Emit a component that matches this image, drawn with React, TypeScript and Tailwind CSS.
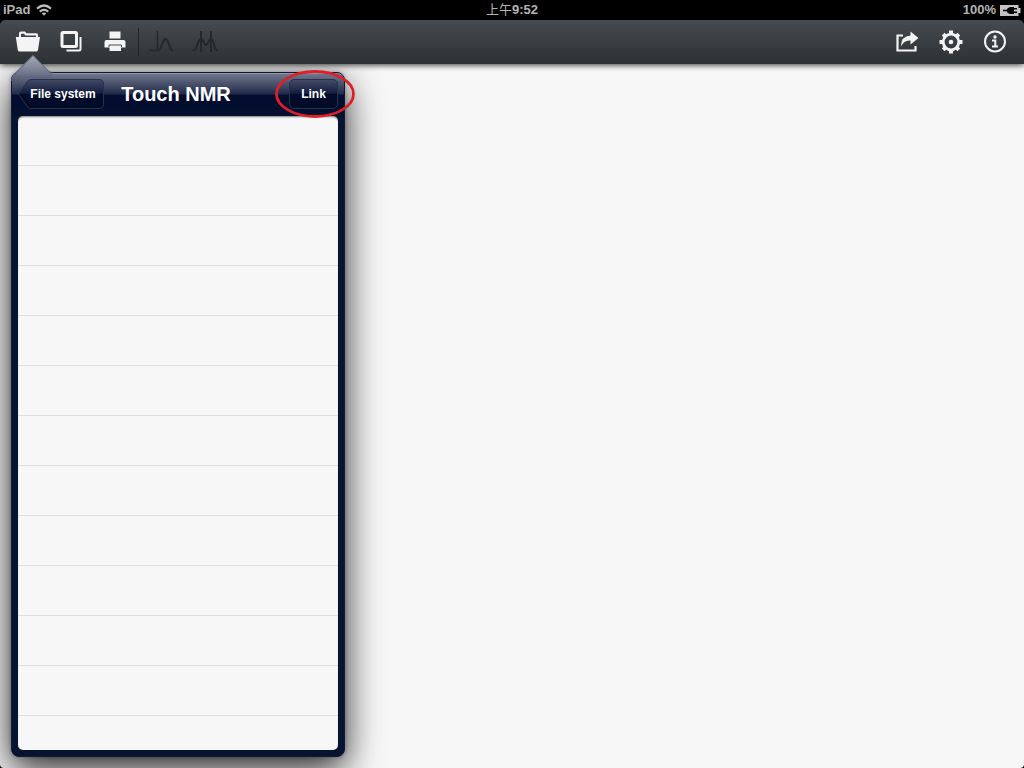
import type { ReactNode } from 'react';

function ToolButton({ label, children, disabled = false }: { label: string; children: ReactNode; disabled?: boolean }) {
  return (
    <button type="button" aria-label={label} disabled={disabled} className="flex size-11 shrink-0 items-center justify-center">
      {children}
    </button>
  );
}

function StatusBar() {
  return (
    <header className="grid h-5 shrink-0 grid-cols-3 items-center bg-black px-[3px] text-[13px] font-bold leading-5 text-[#b4b4b4]">
      <div className="flex items-center gap-[6px]">
        <span>iPad</span>
        <svg width="16" height="12" viewBox="0 0 16 12" fill="none" stroke="#bdbdbd" strokeWidth="2.200" aria-hidden="true">
          <path d="M1 4.600Q8 -1.600 15 4.600" />
          <path d="M3.800 7.600Q8 4 12.200 7.600" />
          <path d="M5.700 9.200Q8 7.600 10.300 9.200L8 11.800Z" fill="#bdbdbd" stroke="none" />
        </svg>
      </div>
      <div className="text-center">
        <span className="font-normal">上午</span>9:52
      </div>
      <div className="flex items-center justify-end gap-1">
        <span>100%</span>
        <svg width="21" height="11" viewBox="0 0 21 11" aria-hidden="true">
          <path d="M0 0H18.500V3H20.500V8H18.500V11H0Z" fill="#c4c4c4" />
          <path d="M3 5.500H7M13 3.700H17M13 7.300H17" stroke="#000" strokeWidth="1.500" />
          <path d="M14 2V9H10.500Q7 8.500 6.500 5.500Q7 2.500 10.500 2Z" fill="#000" />
        </svg>
      </div>
    </header>
  );
}

function Toolbar() {
  return (
    <nav className="relative z-10 flex h-11 shrink-0 items-center justify-between rounded-t-[5px] bg-linear-to-b from-[#454b50] to-[#2c3133] pl-[5px] pr-[7px] shadow-[0_1px_6px_rgba(0,0,0,0.8)]">
      <div className="flex items-center">
        <ToolButton label="Files">
          <svg width="26" height="24" viewBox="0 0 26 24" aria-hidden="true">
            <path d="M5 7V3.500Q5 1.500 7 1.500H11L12.500 3.200H22.500Q24 3.200 24 4.700V7H22V5.500H11.500L10 3.800H7V7Z" fill="#f4f4f4" />
            <path d="M1.800 7H26L24 20Q23.700 21.500 22 21.500H5.700Q4 21.500 3.800 20Z" fill="#f4f4f4" />
          </svg>
        </ToolButton>
        <ToolButton label="Documents">
          <svg width="24" height="24" viewBox="0 0 24 24" fill="none" stroke="#f4f4f4" aria-hidden="true">
            <rect x="3" y="2.500" width="14.500" height="14" rx="1" strokeWidth="3" />
            <path d="M21.500 7V19Q21.500 20.500 20 20.500H7.500" strokeWidth="2" />
          </svg>
        </ToolButton>
        <ToolButton label="Print">
          <svg width="24" height="24" viewBox="0 0 24 24" fill="#f4f4f4" aria-hidden="true">
            <path d="M6.500 1.500H17.500V8.500H6.500Z" />
            <path d="M3.500 10H20.500Q22.500 10 22.500 12V17.500H18V21H6.500V17.500H1.500V12Q1.500 10 3.500 10Z" />
            <path d="M6 17V15H18.500V17" fill="none" stroke="#454b50" strokeWidth="1" />
          </svg>
        </ToolButton>
        <div className="ml-px h-7 w-px bg-[#202426]" />
        <ToolButton label="Baseline" disabled>
          <svg width="26" height="24" viewBox="0 0 26 24" fill="none" stroke="#22282b" strokeWidth="1.500" aria-hidden="true">
            <path d="M1 20.500H10M9.500 1V21" />
            <path d="M10 20.500C14 20.500 14 9 17.500 9S21 20.500 25 20.500" strokeWidth="2" />
          </svg>
        </ToolButton>
        <ToolButton label="Peaks" disabled>
          <svg width="26" height="24" viewBox="0 0 26 24" fill="none" stroke="#22282b" strokeWidth="2" aria-hidden="true">
            <path d="M9 1V22M19 1V22" />
            <path d="M1 20.500C6 20.500 5 9 9 9C11.500 9 12 15 14 15S16.500 9 19 9C23 9 21 20.500 25.500 20.500" />
          </svg>
        </ToolButton>
      </div>
      <div className="flex items-center">
        <ToolButton label="Share">
          <svg width="24" height="24" viewBox="0 0 24 24" aria-hidden="true">
            <path d="M8 5.500H2.500V20.500H20.500V16" fill="none" stroke="#f4f4f4" strokeWidth="2.200" />
            <path d="M15.500 1.500L23.500 8L15.500 14.500V10.500Q9 10 6 16.500Q6 6 15.500 5.500Z" fill="#f4f4f4" />
          </svg>
        </ToolButton>
        <ToolButton label="Settings">
          <svg width="24" height="24" viewBox="0 0 24 24" fill="none" stroke="#f4f4f4" aria-hidden="true">
            <circle cx="12" cy="12" r="7.800" strokeWidth="2.800" />
            <circle cx="12" cy="12" r="2.300" fill="#f4f4f4" stroke="none" />
            <path d="M12 0.500V4M12 20V23.500M0.500 12H4M20 12H23.500M4.200 4.200L6.300 6.300M17.700 17.700L19.800 19.800M4.200 19.800L6.300 17.700M17.700 6.300L19.800 4.200" strokeWidth="4" />
          </svg>
        </ToolButton>
        <ToolButton label="Information">
          <svg width="24" height="24" viewBox="0 0 24 24" fill="none" stroke="#f4f4f4" aria-hidden="true">
            <circle cx="12" cy="11.500" r="10" strokeWidth="2" />
            <circle cx="12" cy="7" r="1.700" fill="#f4f4f4" stroke="none" />
            <path d="M9 10.500H12.300V16.500M9 16.500H15" strokeWidth="2" />
          </svg>
        </ToolButton>
      </div>
    </nav>
  );
}

function FilePopover() {
  return (
    <>
      <section
        aria-label="Touch NMR"
        className="absolute bottom-[11px] left-[11px] top-2 flex w-[334px] flex-col rounded-lg border border-[#101a36] bg-[#07142f] px-[6px] pb-[6px] shadow-[0_12px_36px_rgba(0,0,0,0.85),0_0_4px_rgba(0,0,0,0.3)]"
      >
        <div className="-mx-[6px] grid h-[43px] shrink-0 grid-cols-[1fr_auto_1fr] items-center rounded-t-[7px] border-t border-[#9298a8] bg-[linear-gradient(to_bottom,#70768b_0%,#202a49_48%,#020d30_50%,#04102d_100%)] pb-[2px] pl-[6px] pr-[6px] text-white">
          <button type="button" className="relative h-[30px] w-[86px] justify-self-start pl-1 text-xs font-bold">
            <svg className="absolute inset-0" width="86" height="30" viewBox="0 0 86 30" aria-hidden="true">
              <defs>
                <linearGradient id="backFill" x1="0" y1="0" x2="0" y2="1">
                  <stop offset="0" stopColor="#424a65" />
                  <stop offset="0.480" stopColor="#131d3f" />
                  <stop offset="0.500" stopColor="#020b2a" />
                  <stop offset="1" stopColor="#020b25" />
                </linearGradient>
              </defs>
              <path d="M13 0.500H81Q85.500 0.500 85.500 5V25Q85.500 29.500 81 29.500H13Q10.500 29.500 9 27L0.500 15L9 3Q10.500 0.500 13 0.500Z" fill="url(#backFill)" stroke="#27314e" />
            </svg>
            <span className="relative">File system</span>
          </button>
          <h1 className="pr-1 text-xl font-bold leading-6">Touch NMR</h1>
          <button
            type="button"
            className="h-[30px] w-[49px] justify-self-end rounded-[5px] border border-[#27314e] bg-[linear-gradient(to_bottom,#424a65_0%,#131d3f_48%,#020b2a_50%,#020b25_100%)] text-xs font-bold"
          >
            Link
          </button>
        </div>
        <ul className="min-h-0 flex-1 overflow-hidden rounded-[5px] bg-[#f7f7f7] shadow-[inset_0_2px_2px_-1px_rgba(0,0,0,0.5)]">
          {Array.from({ length: 13 }, (_, i) => (
            <li key={i} className="h-[50px] border-b border-[#dedede]" />
          ))}
        </ul>
      </section>
      <svg className="absolute -top-[9px] left-[11px] z-20" width="42" height="26" viewBox="0 0 42 26" aria-hidden="true">
        <defs>
          <linearGradient id="arrowFill" x1="0" y1="0" x2="0" y2="26" gradientUnits="userSpaceOnUse">
            <stop offset="0" stopColor="#a9adbb" />
            <stop offset="0.700" stopColor="#70768b" />
            <stop offset="1" stopColor="#4f576f" />
          </linearGradient>
        </defs>
        <path d="M0 26V24Q0 22 1.500 20.500L22 0L38 16.500Q39.500 18 42 18V23H10L7 26Z" fill="url(#arrowFill)" />
        <path d="M0.500 26V24Q0.500 22 2 20.500L22 0.500L38 16.500Q39.500 17.500 42 17.500" fill="none" stroke="#4d5263" strokeWidth="0.800" />
      </svg>
      <svg className="pointer-events-none absolute left-[275px] top-[6px] z-20" width="80" height="48" viewBox="0 0 80 48" aria-hidden="true">
        <ellipse cx="40" cy="24" rx="38.500" ry="22.500" fill="none" stroke="#dc202a" strokeWidth="2.800" />
      </svg>
    </>
  );
}

export default function App() {
  return (
    <div className="flex h-screen flex-col overflow-hidden bg-black font-['Liberation_Sans','Noto_Sans_CJK_SC',sans-serif]">
      <StatusBar />
      <Toolbar />
      <main className="relative min-h-0 flex-1 overflow-visible rounded-b-[4px] bg-[#f7f7f7]">
        <FilePopover />
      </main>
    </div>
  );
}
